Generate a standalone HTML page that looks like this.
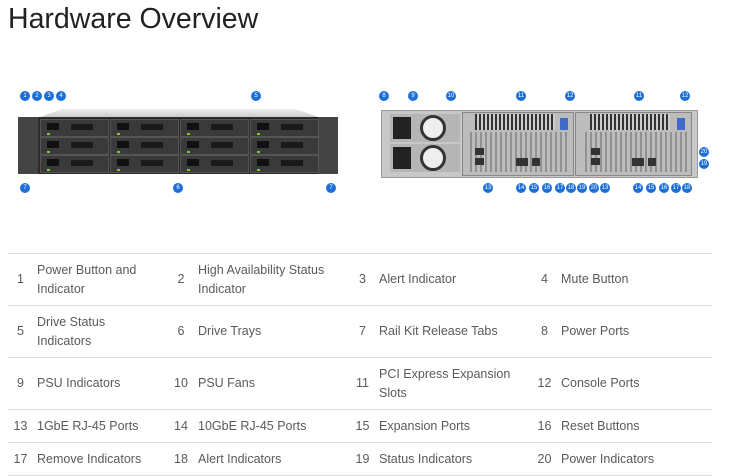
<!DOCTYPE html>
<html><head><style>
body{margin:0;width:730px;height:473px;background:#fff;font-family:"Liberation Sans",sans-serif;position:relative;overflow:hidden}
h1{position:absolute;left:8px;top:3px;margin:0;font-weight:400;font-size:28.5px;color:#222}
.b{position:absolute;width:10px;height:10px;border-radius:50%;background:#1c6fd6;color:#fff;font-size:6px;line-height:10px;text-align:center}
.a{position:absolute;background:#333}
table{position:absolute;left:8px;top:253px;width:704px;border-collapse:collapse;font-size:12.5px;color:#5a5a5a;table-layout:fixed}
td{border-top:1px solid #ddd;border-bottom:1px solid #ddd;padding:0;line-height:19px}
td.n{text-align:center;padding-right:4px}
</style></head><body>
<h1>Hardware Overview</h1>
<div style="position:absolute;left:40px;top:109px;width:278px;height:8px;background:linear-gradient(#eee,#ccc);clip-path:polygon(8% 0,92% 0,100% 100%,0 100%)"></div>
<div style="position:absolute;left:18px;top:117px;width:320px;height:57px;background:#2b2b2b;border-radius:2px"></div>
<div style="position:absolute;left:18px;top:117px;width:20px;height:57px;background:#444"></div>
<div style="position:absolute;left:318px;top:117px;width:20px;height:57px;background:#444"></div>
<div id="trays"></div>
<script>
var h='';for(var r=0;r<3;r++)for(var c=0;c<4;c++){h+='<div style="position:absolute;left:'+(40+c*70)+'px;top:'+(119+r*18)+'px;width:67px;height:16px;background:#3a3a3a;border:1px solid #555"><div style="position:absolute;left:6px;top:3px;width:12px;height:7px;background:#111"></div><div style="position:absolute;left:30px;top:4px;width:22px;height:6px;background:#1a1a1a"></div><div style="position:absolute;left:6px;top:13px;width:3px;height:2px;background:#7c3"></div></div>'}
document.getElementById('trays').outerHTML=h;
</script>
<div style="position:absolute;left:381px;top:110px;width:315px;height:66px;background:#c8c8c8;border:1px solid #999"></div>
<div style="position:absolute;left:390px;top:114px;width:70px;height:28px;background:#b5b5b5"></div>
<div style="position:absolute;left:390px;top:144px;width:70px;height:28px;background:#b5b5b5"></div>
<div style="position:absolute;left:393px;top:117px;width:18px;height:22px;background:#222"></div>
<div style="position:absolute;left:393px;top:147px;width:18px;height:22px;background:#222"></div>
<div style="position:absolute;left:420px;top:115px;width:26px;height:26px;border-radius:50%;background:#eee;border:3px solid #333;box-sizing:border-box"></div>
<div style="position:absolute;left:420px;top:145px;width:26px;height:26px;border-radius:50%;background:#eee;border:3px solid #333;box-sizing:border-box"></div>
<div style="position:absolute;left:462px;top:112px;width:110px;height:62px;background:#bcbcbc;border:1px solid #888"></div>
<div style="position:absolute;left:575px;top:112px;width:115px;height:62px;background:#bcbcbc;border:1px solid #888"></div>
<div style="position:absolute;left:475px;top:114px;width:80px;height:16px;background:repeating-linear-gradient(90deg,#333 0 2px,#ccc 2px 4px)"></div>
<div style="position:absolute;left:590px;top:114px;width:80px;height:16px;background:repeating-linear-gradient(90deg,#333 0 2px,#ccc 2px 4px)"></div>
<div style="position:absolute;left:470px;top:132px;width:100px;height:40px;background:repeating-linear-gradient(90deg,#666 0 2px,transparent 2px 5px);opacity:.5"></div>
<div style="position:absolute;left:585px;top:132px;width:102px;height:40px;background:repeating-linear-gradient(90deg,#666 0 2px,transparent 2px 5px);opacity:.5"></div>
<div style="position:absolute;left:560px;top:118px;width:8px;height:12px;background:#4169c6"></div>
<div style="position:absolute;left:677px;top:118px;width:8px;height:12px;background:#4169c6"></div>
<div class="a" style="left:475px;top:148px;width:9px;height:7px"></div><div class="a" style="left:475px;top:158px;width:9px;height:7px"></div>
<div class="a" style="left:516px;top:158px;width:12px;height:8px"></div><div class="a" style="left:532px;top:158px;width:8px;height:8px"></div>
<div class="a" style="left:591px;top:148px;width:9px;height:7px"></div><div class="a" style="left:591px;top:158px;width:9px;height:7px"></div>
<div class="a" style="left:632px;top:158px;width:12px;height:8px"></div><div class="a" style="left:648px;top:158px;width:8px;height:8px"></div>
<div class="b" style="left:20px;top:91px">1</div><div class="b" style="left:32px;top:91px">2</div><div class="b" style="left:44px;top:91px">3</div><div class="b" style="left:56px;top:91px">4</div><div class="b" style="left:251px;top:91px">5</div>
<div class="b" style="left:20px;top:183px">7</div><div class="b" style="left:173px;top:183px">6</div><div class="b" style="left:326px;top:183px">7</div>
<div class="b" style="left:379px;top:91px">8</div><div class="b" style="left:408px;top:91px">9</div><div class="b" style="left:446px;top:91px">10</div><div class="b" style="left:516px;top:91px">11</div><div class="b" style="left:565px;top:91px">12</div><div class="b" style="left:634px;top:91px">11</div><div class="b" style="left:680px;top:91px">12</div>
<div class="b" style="left:483px;top:183px">13</div><div class="b" style="left:516px;top:183px">14</div><div class="b" style="left:529px;top:183px">15</div><div class="b" style="left:542px;top:183px">16</div><div class="b" style="left:555px;top:183px">17</div><div class="b" style="left:566px;top:183px">18</div><div class="b" style="left:577px;top:183px">19</div><div class="b" style="left:589px;top:183px">20</div><div class="b" style="left:600px;top:183px">13</div><div class="b" style="left:633px;top:183px">14</div><div class="b" style="left:646px;top:183px">15</div><div class="b" style="left:659px;top:183px">16</div><div class="b" style="left:671px;top:183px">17</div><div class="b" style="left:682px;top:183px">18</div><div class="b" style="left:699px;top:147px">20</div><div class="b" style="left:699px;top:159px">19</div>
<table>
<colgroup><col style="width:29px"><col style="width:131px"><col style="width:30px"><col style="width:152px"><col style="width:29px"><col style="width:153px"><col style="width:29px"><col style="width:151px"></colgroup>
<tr style="height:52px"><td class="n">1</td><td>Power Button and<br>Indicator</td><td class="n">2</td><td>High Availability Status<br>Indicator</td><td class="n">3</td><td>Alert Indicator</td><td class="n">4</td><td>Mute Button</td></tr>
<tr style="height:52px"><td class="n">5</td><td>Drive Status<br>Indicators</td><td class="n">6</td><td>Drive Trays</td><td class="n">7</td><td>Rail Kit Release Tabs</td><td class="n">8</td><td>Power Ports</td></tr>
<tr style="height:52px"><td class="n">9</td><td>PSU Indicators</td><td class="n">10</td><td>PSU Fans</td><td class="n">11</td><td>PCI Express Expansion<br>Slots</td><td class="n">12</td><td>Console Ports</td></tr>
<tr style="height:33px"><td class="n">13</td><td>1GbE RJ-45 Ports</td><td class="n">14</td><td>10GbE RJ-45 Ports</td><td class="n">15</td><td>Expansion Ports</td><td class="n">16</td><td>Reset Buttons</td></tr>
<tr style="height:33px"><td class="n">17</td><td>Remove Indicators</td><td class="n">18</td><td>Alert Indicators</td><td class="n">19</td><td>Status Indicators</td><td class="n">20</td><td>Power Indicators</td></tr>
</table>
</body></html>
